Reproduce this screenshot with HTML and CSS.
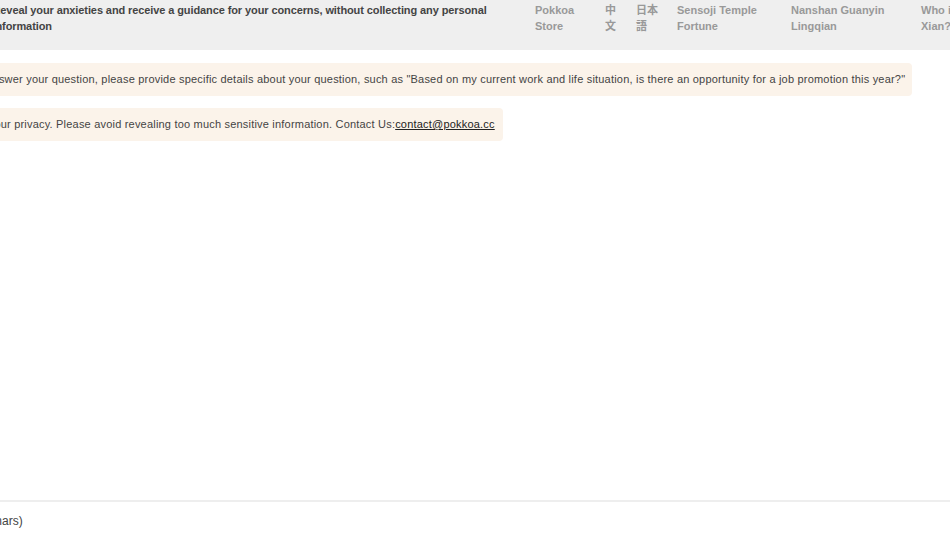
FILE: index.html
```html
<!DOCTYPE HTML>
<html>
    <head>
        <meta charset="UTF-8">
        <title>Pokkoa</title>
        <link rel="stylesheet" href="styles.css">
    </head>
    <body>
        <div id="wrap">
            <div class="top">
                <p class="intro">Reveal your anxieties and receive a guidance for your concerns, without collecting any personal Information</p>
                <ul class="nav">
                    <li class="w1"><a href="#">Pokkoa Store</a></li>
                    <li class="w2"><a href="#">中文</a></li>
                    <li class="w3"><a href="#">日本語</a></li>
                    <li class="w4"><a href="#">Sensoji Temple Fortune</a></li>
                    <li class="w5"><a href="#">Nanshan Guanyin Lingqian</a></li>
                    <li class="w6"><a href="#">Who is Xian?</a></li>
                </ul>
            </div>
            <div class="content">
                <div class="msg first">
                    <p>To answer your question, please provide specific details about your question, such as "Based on my current work and life situation, is there an opportunity for a job promotion this year?"</p>
                </div>
                <div class="msg second">
                    <p>We respect your privacy. Please avoid revealing too much sensitive information. Contact Us:<a href="mailto:contact@pokkoa.cc">contact@pokkoa.cc</a></p>
                </div>
            </div>
            <div class="bottom">
                <p>(0/500 chars)</p>
            </div>
        </div>
    </body>
</html>
```

FILE: styles.css
```css
html,body{margin:0;padding:0;}
body{font-family: "Liberation Sans",Arial,sans-serif;color:#444;background:#fff;overflow:hidden;}
p{margin:0;}
ul,li{margin:0;padding:0;list-style:none;}
a{text-decoration:none;}

#wrap{
    display: flex;
    flex-direction: column;
    width: 950px;
    height: 534px;
    overflow: hidden;
}
#wrap .top{
    display: flex;
    height: 50px;
    padding-top: 2px;
    box-sizing: border-box;
    background-color: #efefef;
}
#wrap .top .intro{
    flex-shrink: 0;
    width: 528px;
    margin-left: -7.5px;
    font-size: 11px;
    letter-spacing: -0.1px;
    line-height: 16px;
    font-weight: bold;
    color: #444;
}
#wrap .top .nav{
    display: flex;
    flex-shrink: 0;
    gap: 20px;
    margin-left: 14.5px;
    font-size: 11px;
    line-height: 16px;
    font-weight: bold;
    font-family: "Liberation Sans","Noto Sans CJK JP",sans-serif;
}
#wrap .top .nav li{
    flex-shrink: 0;
}
#wrap .top .nav a{
    color: #999;
}
#wrap .top .nav .w1{width: 50px;}
#wrap .top .nav .w2{width: 11px;}
#wrap .top .nav .w3{width: 22px;margin-right: -1px;}
#wrap .top .nav .w4{width: 94px;}
#wrap .top .nav .w5{width: 110px;}
#wrap .top .nav .w6{width: 60px;}

#wrap .content{
    flex: 1;
    padding-top: 13px;
}
#wrap .content .msg{
    display: flex;
    margin-bottom: 12px;
}
#wrap .content .msg p{
    flex-shrink: 0;
    padding: 8px 7px 8px 8px;
    font-size: 11px;
    letter-spacing: 0.2px;
    line-height: 17px;
    color: #444;
    background-color: #fbf3ea;
    border-radius: 4px;
}
#wrap .content .first p{
    margin-left: -37px;
}
#wrap .content .second p{
    margin-left: -80px;
    padding-right: 8px;
}
#wrap .content .msg a{
    color: #222;
    text-decoration: underline;
}

#wrap .bottom{
    height: 32px;
    border-top: 2px solid #eee;
}
#wrap .bottom p{
    margin-left: -48px;
    padding-top: 11px;
    font-size: 12px;
    line-height: 16px;
    color: #444;
}
```
